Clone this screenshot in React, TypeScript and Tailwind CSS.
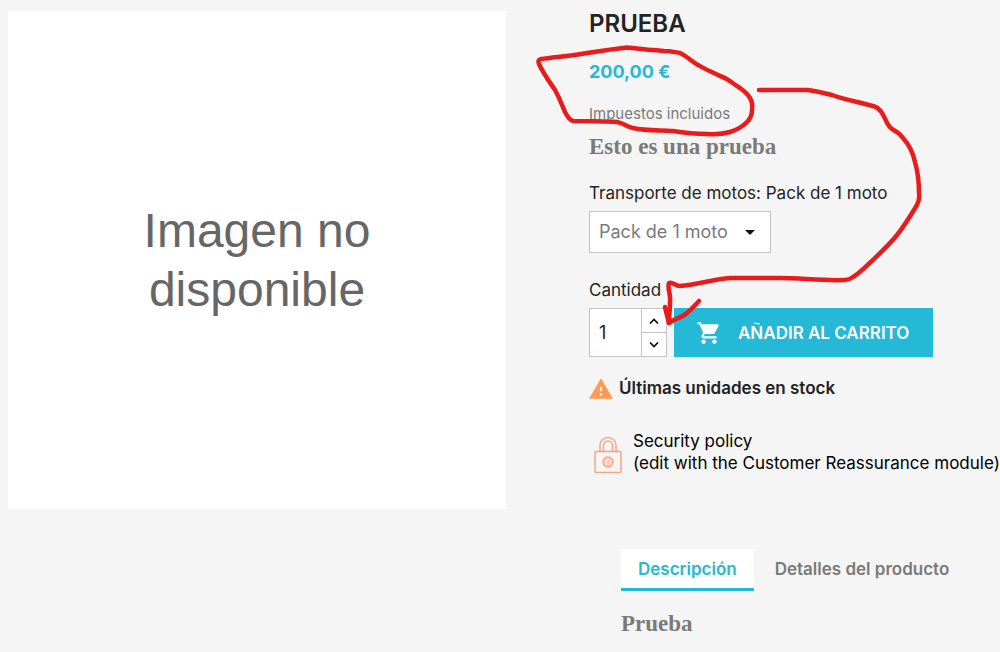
import { useState } from "react";

const packs = ["Pack de 1 moto", "Pack de 2 motos", "Pack de 3 motos"];

function CartIcon() {
  return (
    <svg viewBox="0 0 24 24" className="size-[26px]" fill="currentColor" aria-hidden="true">
      <path d="M7 18c-1.1 0-1.99.9-1.99 2S5.9 22 7 22s2-.9 2-2-.9-2-2-2zM1 2v2h2l3.6 7.59-1.35 2.45c-.16.28-.25.61-.25.96 0 1.1.9 2 2 2h12v-2H7.42c-.14 0-.25-.11-.25-.25l.03-.12.9-1.63h7.45c.75 0 1.41-.41 1.75-1.03l3.58-6.49A1 1 0 0 0 20 4H5.21l-.94-2H1zm16 16c-1.1 0-1.99.9-1.99 2s.89 2 1.99 2 2-.9 2-2-.9-2-2-2z" />
    </svg>
  );
}

function WarningIcon() {
  return (
    <svg viewBox="1 2 22 19" className="h-[21px] w-6" fill="#ff9a52" aria-hidden="true">
      <path d="M1 21h22L12 2 1 21zm12-3h-2v-2h2v2zm0-4h-2v-4h2v4z" />
    </svg>
  );
}

function LockIcon() {
  return (
    <svg viewBox="0 0 28 38" className="h-[38px] w-7" fill="none" stroke="#f6a581" strokeWidth="1.5" aria-hidden="true">
      <path d="M6 15V9.500a8 8 0 0 1 16 0V15" />
      <path d="M9.500 15V9.500a4.500 4.500 0 0 1 9 0V15" />
      <rect x="1" y="15.500" width="26" height="21" rx="1" />
      <circle cx="14" cy="26" r="5" fill="#fbd9c9" />
      <path d="M12 27.500l4-3" strokeWidth="1" stroke="#f9c4ad" />
    </svg>
  );
}

// Hand-drawn marks that lie over the price and the buy button
function Marks() {
  return (
    <svg
      width="1000"
      height="652"
      className="pointer-events-none absolute top-0 left-0"
      fill="none"
      stroke="#e81c1c"
      strokeWidth="4.5"
      strokeLinecap="round"
      strokeLinejoin="round"
      aria-hidden="true"
    >
      <path d="M680 53C674 52 670 51 664 51C648 50 640 49 627 47.500C613 49 600 51 587 53C570 56 555 57 541 59Q537 60 539 64C543 73 549 81 555 90C560 99 562 105 565 112Q569 120 573 121C590 121 604 121 617 122C624 123 627 127 633 128C646 131 660 130 673 131C685 133 695 134 707 134Q720 135 730 132Q740 129 747 122Q752 117 752 110Q753 103 750 98Q747 93 740 88C732 83 727 78 720 76C713 72 706 70 700 66C693 63 687 56 680 53" />
      <path d="M759 90H808C816 91 824 93 832 95C845 100 860 102 873 106Q878 107 882 113C886 119 887 126 892 129C896 131 900 134 903 138Q912 148 915 162Q919 176 919 193Q920 199 917 205C911 215 905 225 897 235C890 244 882 251 873 260C867 265 860 273 853 277Q849 280 845 280C822 281 801 278 780 278H730C713 279 697 285 680 286C675 286 672 281 669 283C667 288 671 294 670 302C670 309 669 317 669 323" />
      <path d="M665 307C666 312 668 319 669 323C674 319 681 318 687 313C692 309 695 305 699 301" />
    </svg>
  );
}

export default function App() {
  const [pack, setPack] = useState(packs[0]);
  const [quantity, setQuantity] = useState(1);
  const [tab, setTab] = useState("desc");

  const tabClass = (id: string) =>
    tab === id
      ? "h-[42px] border-b-[3px] border-[#24b9d7] bg-white px-[17px] text-[#24b9d7]"
      : "h-[42px] border-b-[3px] border-transparent px-[17px] text-[#7a7a7a]";

  return (
    <main className="relative min-h-screen overflow-hidden bg-[#f5f5f5] font-['Inter','Liberation_Sans',sans-serif] text-[17px] leading-6 text-[#232323]">
      <div className="grid grid-cols-[498fr_411fr] items-start gap-[83px] pl-2">
        <figure className="mt-[11px] flex aspect-square items-center justify-center bg-white text-center font-['Liberation_Sans',sans-serif] text-[48px] leading-[59px] text-[#666]">
          <p>
            Imagen no
            <br />
            disponible
          </p>
        </figure>

        <section className="min-w-0 pt-2 whitespace-nowrap">
          <h1 className="text-2xl leading-8 font-semibold">PRUEBA</h1>
          <p className="mt-5 text-[18px] font-bold text-[#24b9d7]">200,00 €</p>
          <p className="mt-[18px] text-[15px] text-[#7a7a7a]">Impuestos incluidos</p>
          <h2 className="mt-[7px] font-['Liberation_Serif',serif] text-[23px] leading-7 font-bold text-[#7a7a7a]">
            Esto es una prueba
          </h2>

          <form onSubmit={(e) => e.preventDefault()}>
            <label htmlFor="pack" className="mt-5 block">
              Transporte de motos: {pack}
            </label>
            <div className="relative mt-[6px] w-[182px]">
              <select
                id="pack"
                value={pack}
                onChange={(e) => setPack(e.target.value)}
                className="h-[42px] w-full appearance-none border border-[#c4c4c4] bg-white pl-[9px] text-[18px] text-[#7a7a7a]"
              >
                {packs.map((p) => (
                  <option key={p}>{p}</option>
                ))}
              </select>
              <svg viewBox="0 0 10 5" className="pointer-events-none absolute top-[19px] right-4 h-[5px] w-[10px]" aria-hidden="true">
                <path d="M0 0h10L5 5z" fill="#111" />
              </svg>
            </div>

            <label htmlFor="quantity" className="mt-[25px] block">
              Cantidad
            </label>
            <div className="mt-[6px] flex gap-[7px]">
              <div className="flex h-[49px] w-[78px] border border-[#c4c4c4] bg-white">
                <input
                  id="quantity"
                  type="text"
                  value={quantity}
                  onChange={(e) => setQuantity(Number(e.target.value) || 1)}
                  className="w-0 flex-1 pl-[9px] text-[18px]"
                />
                <div className="flex w-[25px] flex-col border-l border-[#c4c4c4]">
                  <button
                    type="button"
                    aria-label="Aumentar"
                    onClick={() => setQuantity(quantity + 1)}
                    className="flex flex-1 items-center justify-center border-b border-[#c4c4c4]"
                  >
                    <svg viewBox="0 0 10 6" className="h-[6px] w-[10px]" fill="none" stroke="#111" strokeWidth="1.7" aria-hidden="true">
                      <path d="M1 5.500l4-4 4 4" />
                    </svg>
                  </button>
                  <button
                    type="button"
                    aria-label="Disminuir"
                    onClick={() => setQuantity(Math.max(1, quantity - 1))}
                    className="flex flex-1 items-center justify-center"
                  >
                    <svg viewBox="0 0 10 6" className="h-[6px] w-[10px]" fill="none" stroke="#111" strokeWidth="1.7" aria-hidden="true">
                      <path d="M1 .5l4 4 4-4" />
                    </svg>
                  </button>
                </div>
              </div>
              <button
                type="submit"
                className="flex h-[49px] w-[259px] items-center gap-4 bg-[#24b9d7] pl-[22px] font-semibold text-white"
              >
                <CartIcon />
                AÑADIR AL CARRITO
              </button>
            </div>
          </form>

          <p className="mt-[19px] flex items-center gap-[6px] font-semibold">
            <WarningIcon />
            Últimas unidades en stock
          </p>

          <div className="mt-[30px] flex items-end gap-[11px] pl-[5px] leading-[22px] text-black">
            <LockIcon />
            <p>
              Security policy
              <br />
              (edit with the Customer Reassurance module)
            </p>
          </div>

          <div className="mt-[75px] pl-8">
            <div role="tablist" className="flex gap-1 font-semibold">
              <button type="button" role="tab" aria-selected={tab === "desc"} onClick={() => setTab("desc")} className={tabClass("desc")}>
                Descripción
              </button>
              <button type="button" role="tab" aria-selected={tab === "details"} onClick={() => setTab("details")} className={tabClass("details")}>
                Detalles del producto
              </button>
            </div>
            <h2 className="mt-[19px] font-['Liberation_Serif',serif] text-[23px] leading-7 font-bold text-[#7a7a7a]">Prueba</h2>
          </div>
        </section>
      </div>

      <Marks />
    </main>
  );
}
